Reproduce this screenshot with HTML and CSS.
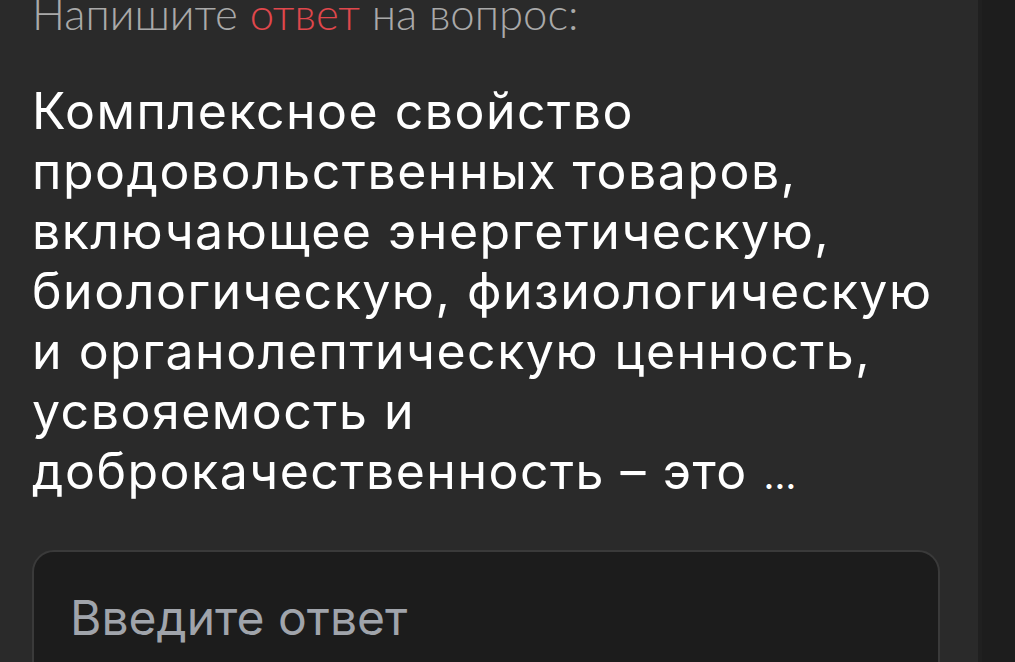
FILE: index.html
```html
<!DOCTYPE html>
<html lang="ru">
<head>
<meta charset="utf-8">
<link rel="stylesheet" href="styles.css">
</head>
<body>
<div class="page">
  <main class="main">
    <p class="prompt">Напишите <span class="accent">ответ</span> на вопрос:</p>
    <h1 class="question">Комплексное свойство продовольственных товаров, включающее энергетическую, биологическую, физиологическую и органолептическую ценность, усвояемость и доброкачественность – это <span class="ellipsis">…</span></h1>
    <div class="answer">
      <input class="answer-input" type="text" placeholder="Введите ответ">
    </div>
  </main>
  <aside class="side"></aside>
</div>
</body>
</html>
```

FILE: styles.css
```css
html, body {
  margin: 0;
  padding: 0;
  height: 100%;
  overflow: hidden;
}
body {
  background: #1d1d1d;
}
.page {
  display: flex;
  height: 100%;
}
.main {
  width: 982px;
  box-sizing: border-box;
  background: #2a2a2a;
  padding: 0 38px 0 32px;
  border-right: 4px solid #202020;
  flex: none;
}
.side {
  flex: 1;
  background: #1d1d1d;
}
.prompt {
  margin: -9px 0 0 0;
  font-family: "Lato", "Open Sans", sans-serif;
  font-weight: 300;
  font-size: 43.7px;
  line-height: 44px;
  color: #a9a9a9;
  white-space: nowrap;
}
.accent {
  color: #e0474c;
}
.question {
  margin: 46px 0 0 0;
  font-family: "Inter", "Open Sans", sans-serif;
  font-weight: 400;
  font-size: 50px;
  line-height: 60px;
  letter-spacing: 1.5px;
  color: #ffffff;
}
.ellipsis {
  letter-spacing: 0;
  font-size: 38px;
  line-height: 1;
}
.answer {
  margin-top: 49px;
  height: 200px;
  box-sizing: border-box;
  border: 2px solid #3a3a3a;
  border-radius: 22px;
  background: #1c1c1c;
  padding: 38px 36px 0 36px;
}
.answer-input {
  width: 100%;
  box-sizing: border-box;
  border: none;
  outline: none;
  background: transparent;
  padding: 0;
  font-family: "Inter", "Roboto", sans-serif;
  font-size: 48px;
  line-height: 56px;
  color: #ffffff;
}
.answer-input::placeholder {
  color: #a0a4ab;
}
```
